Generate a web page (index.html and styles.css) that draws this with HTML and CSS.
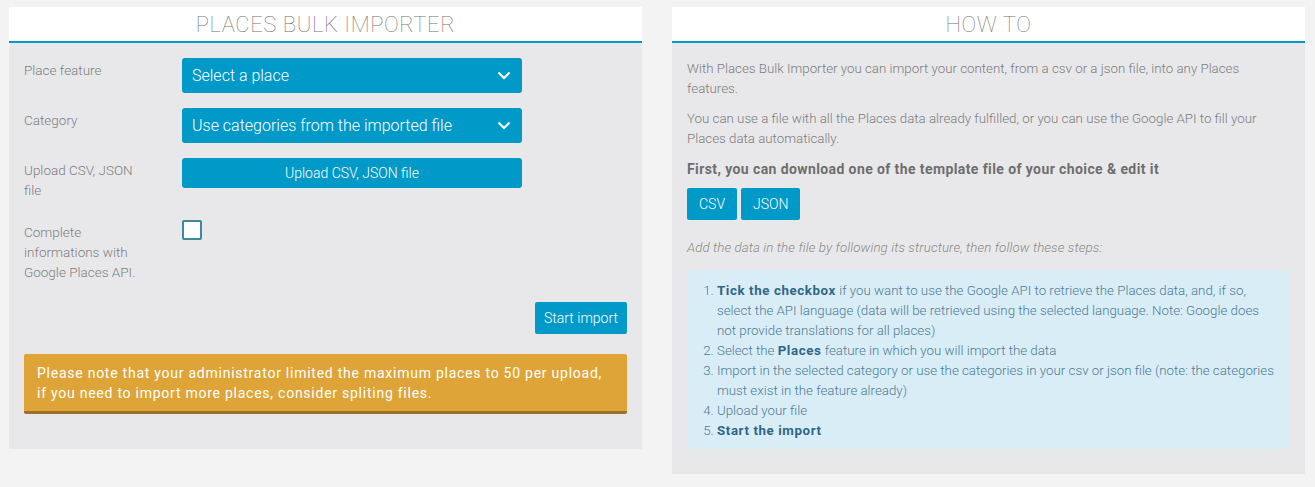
FILE: index.html
```html
<!DOCTYPE html>
<html>
<head>
<meta charset="utf-8">
<title>Places Bulk Importer</title>
<link rel="stylesheet" href="styles.css">
</head>
<body>
<div class="page">
  <section class="panel panel-left">
    <header class="panel-head"><h2>PLACES BULK IMPORTER</h2></header>
    <div class="panel-body">
      <div class="row">
        <label class="lbl">Place feature</label>
        <div class="ctl">
          <div class="select">
            <span>Select a place</span>
            <svg class="chev" width="14" height="9" viewBox="0 0 14 9"><path d="M1.5 1.5 L7 7 L12.5 1.5" fill="none" stroke="#fff" stroke-width="2"/></svg>
          </div>
        </div>
      </div>
      <div class="row">
        <label class="lbl">Category</label>
        <div class="ctl">
          <div class="select">
            <span>Use categories from the imported file</span>
            <svg class="chev" width="14" height="9" viewBox="0 0 14 9"><path d="M1.5 1.5 L7 7 L12.5 1.5" fill="none" stroke="#fff" stroke-width="2"/></svg>
          </div>
        </div>
      </div>
      <div class="row">
        <label class="lbl">Upload CSV, JSON file</label>
        <div class="ctl">
          <div class="upload">Upload CSV, JSON file</div>
        </div>
      </div>
      <div class="row row-check">
        <label class="lbl">Complete informations with Google Places API.</label>
        <div class="ctl">
          <span class="checkbox"></span>
        </div>
      </div>
      <div class="actions">
        <span class="btn">Start import</span>
      </div>
      <div class="warning">Please note that your administrator limited the maximum places to 50 per upload, if you need to import more places, consider spliting files.</div>
    </div>
  </section>

  <section class="panel panel-right">
    <header class="panel-head"><h2>HOW TO</h2></header>
    <div class="panel-body how">
      <p>With Places Bulk Importer you can import your content, from a csv or a json file, into any Places features.</p>
      <p>You can use a file with all the Places data already fulfilled, or you can use the Google API to fill your Places data automatically.</p>
      <p class="strong">First, you can download one of the template file of your choice &amp; edit it</p>
      <div class="tpl">
        <span class="btn btn-sm">CSV</span>
        <span class="btn btn-sm">JSON</span>
      </div>
      <p class="em">Add the data in the file by following its structure, then follow these steps:</p>
      <div class="info">
        <ol>
          <li><b>Tick the checkbox</b> if you want to use the Google API to retrieve the Places data, and, if so, select the API language (data will be retrieved using the selected language. Note: Google does not provide translations for all places)</li>
          <li>Select the <b>Places</b> feature in which you will import the data</li>
          <li>Import in the selected category or use the categories in your csv or json file (note: the categories must exist in the feature already)</li>
          <li>Upload your file</li>
          <li><b>Start the import</b></li>
        </ol>
      </div>
    </div>
  </section>
</div>
</body>
</html>
```

FILE: styles.css
```css
html, body {
  margin: 0;
  padding: 0;
  background: #f3f3f3;
}
body {
  font-family: Roboto, "Liberation Sans", Arial, sans-serif;
  font-weight: 300;
  color: #7c7c7c;
  font-size: 14px;
  line-height: 20px;
}
.page {
  display: flex;
  align-items: flex-start;
  gap: 30px;
  padding: 7px 10px 0 9px;
}
.panel {
  width: 633px;
  background: #e8e8ea;
}
.panel-head {
  background: #fff;
  height: 34px;
  border-bottom: 2px solid #0099c8;
  display: flex;
  align-items: center;
  justify-content: center;
}
.panel-head h2 {
  margin: 0;
  font-weight: 100;
  font-size: 22px;
  color: #707070;
  letter-spacing: 0.6px;
  line-height: 34px;
  padding-top: 2px;
}
.panel-left .panel-body {
  padding: 15px 15px 35px 15px;
}
.row {
  display: flex;
  margin-bottom: 15px;
}
.lbl {
  width: 125px;
  flex: none;
  padding: 2px 33px 0 0;
  font-size: 13.5px;
  color: #7e7e7e;
}
.ctl {
  flex: none;
  width: 340px;
}
.select {
  height: 35px;
  background: #0099c8;
  border-radius: 3px;
  color: #fff;
  display: flex;
  align-items: center;
  justify-content: space-between;
  padding: 0 11px 0 10px;
  font-size: 16px;
  font-weight: 300;
}
.chev {
  display: block;
}
.upload {
  height: 30px;
  background: #0099c8;
  border-radius: 3px;
  color: #fff;
  display: flex;
  align-items: center;
  justify-content: center;
  font-size: 14px;
}
.row-check {
  margin-top: 20px;
  margin-bottom: 20px;
}
.row-check .lbl {
  padding-top: 2px;
}
.checkbox {
  display: block;
  width: 16px;
  height: 16px;
  border: 2px solid #3b8a9f;
  border-radius: 2px;
  background: #fff;
}
.actions {
  display: flex;
  justify-content: flex-end;
  margin-bottom: 20px;
}
.btn {
  display: inline-flex;
  align-items: center;
  justify-content: center;
  background: #0099c8;
  color: #fff;
  border-radius: 2px;
  height: 32px;
  padding: 0 9px;
  font-size: 14px;
  font-weight: 300;
}
.warning {
  background: #dea437;
  border-bottom: 3px solid #9c6f2b;
  border-radius: 2px;
  color: #fff;
  padding: 9px 13px 8px 13px;
  font-size: 14px;
  letter-spacing: 0.75px;
  font-weight: 400;
}
.how {
  padding: 16px 15px 25px 15px;
  font-size: 13.3px;
}
.how p {
  margin: 0 0 10px 0;
}
.how .strong {
  font-weight: 700;
  color: #6e6e6e;
  font-size: 14px;
  letter-spacing: 0.4px;
}
.tpl {
  display: flex;
  gap: 4px;
  margin-top: -1px;
  margin-bottom: 18px;
}
.btn-sm {
  height: 32px;
  padding: 0 12px;
}
.how .em {
  font-style: italic;
  color: #888;
  margin-bottom: 12px;
  letter-spacing: 0.1px;
}
.info {
  background: #d9edf7;
  color: #4d7c96;
  padding: 11px 15px 8px 15px;
}
.info ol {
  margin: 0;
  padding-left: 15px;
}
.info b {
  font-weight: 700;
  color: #2f6787;
  letter-spacing: 0.6px;
}
```
